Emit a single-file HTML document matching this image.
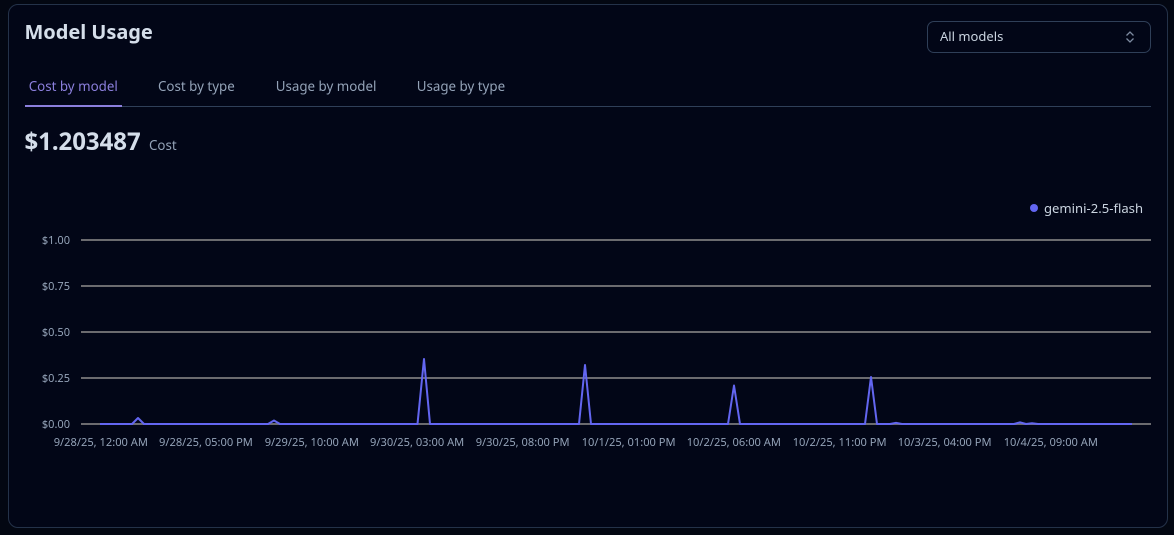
<!DOCTYPE html>
<html><head><meta charset="utf-8">
<style>
html,body{margin:0;padding:0;width:1174px;height:535px;overflow:hidden;background:#030712;font-family:"Noto Sans","Noto Sans CJK JP","Liberation Sans",sans-serif;}
.a{position:absolute;white-space:nowrap;line-height:1}
#p{position:absolute;left:8px;top:4px;width:1158px;height:522px;border:1px solid #243249;border-radius:10px;background:#020617;box-sizing:content-box}
#s{position:absolute;left:927px;top:21px;width:222px;height:30px;border:1px solid #2f3f58;border-radius:7px}
#tl{position:absolute;left:25px;top:106px;width:1126px;height:1px;background:#2f3f58}
#ta{position:absolute;left:25px;top:105px;width:97px;height:2px;background:#8b7fdc}
.t{font-size:13.35px;color:#94a3b8;top:80px}
.y{font-size:11px;color:#94a3b8;right:1104px;}
.x{font-size:11.1px;color:#94a3b8;top:437px}
</style></head><body>
<div id="p"></div>
<div class="a" style="left:24.5px;top:22px;font-size:20px;font-weight:700;color:#d5deea;letter-spacing:-0.05px">Model Usage</div>
<div id="s"></div>
<div class="a" style="left:940px;top:30px;font-size:13px;color:#cbd5e1">All models</div>
<svg class="a" style="left:1123px;top:29px" width="14" height="16" viewBox="0 0 14 16"><path d="M3.5 6.5 L7 3 L10.5 6.5 M3.5 9.5 L7 13 L10.5 9.5" fill="none" stroke="#7c8aa0" stroke-width="1.3"/></svg>
<div id="tl"></div><div id="ta"></div>
<div class="a t" style="left:28.7px;color:#8b7fdc">Cost by model</div>
<div class="a t" style="left:158px">Cost by type</div>
<div class="a t" style="left:275.7px">Usage by model</div>
<div class="a t" style="left:416.7px">Usage by type</div>
<div class="a" style="left:24.5px;top:130px;font-size:24px;font-weight:700;color:#d5deea;letter-spacing:-0.05px">$1.203487</div>
<div class="a" style="left:149px;top:139px;font-size:13.3px;color:#94a3b8">Cost</div>
<div class="a" style="left:1030px;top:204px;width:8px;height:8px;border-radius:50%;background:#6366f1"></div>
<div class="a" style="left:1044px;top:202px;font-size:13.1px;color:#cbd5e1">gemini-2.5-flash</div>
<svg class="a" style="left:0;top:0" width="1174" height="535">
<g stroke="#6b6b6f" stroke-width="2">
<line x1="81" x2="1151" y1="240" y2="240"/><line x1="81" x2="1151" y1="286" y2="286"/><line x1="81" x2="1151" y1="332" y2="332"/><line x1="81" x2="1151" y1="378" y2="378"/><line x1="81" x2="1151" y1="424" y2="424"/>
</g>
<polyline fill="none" stroke="#6366f1" stroke-width="2" stroke-linejoin="round" points="100,424 132,424 138,418 144,424 268,424 274,420.5 280,424 417.5,424 424,359 430,424 579,424 585,365 591,424 728,424 734,385.5 740,424 865,424 871,377 877,424 890,424 896,422.8 902,424 1014,424 1020,422.3 1026,424 1032,423.2 1038,424 1132,424"/>
</svg>
<div class="a y" style="top:235px">$1.00</div>
<div class="a y" style="top:281px">$0.75</div>
<div class="a y" style="top:327px">$0.50</div>
<div class="a y" style="top:373px">$0.25</div>
<div class="a y" style="top:419px">$0.00</div>
<div class="a x" style="left:53.7px">9/28/25, 12:00 AM</div>
<div class="a x" style="left:159px">9/28/25, 05:00 PM</div>
<div class="a x" style="left:264.7px">9/29/25, 10:00 AM</div>
<div class="a x" style="left:370px">9/30/25, 03:00 AM</div>
<div class="a x" style="left:475.7px">9/30/25, 08:00 PM</div>
<div class="a x" style="left:581.7px">10/1/25, 01:00 PM</div>
<div class="a x" style="left:686.7px">10/2/25, 06:00 AM</div>
<div class="a x" style="left:792.7px">10/2/25, 11:00 PM</div>
<div class="a x" style="left:897.7px">10/3/25, 04:00 PM</div>
<div class="a x" style="left:1003.7px">10/4/25, 09:00 AM</div>
</body></html>
